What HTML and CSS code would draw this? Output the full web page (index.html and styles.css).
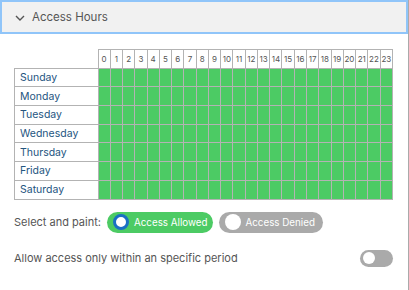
FILE: index.html
```html
<!DOCTYPE html>
<html lang="en">
<head>
    <meta charset="UTF-8">
    <title>Access Hours</title>
    <link rel="stylesheet" href="styles.css">
</head>
<body>
    <div class="panel">
        <div class="panel-header">
            <svg class="chevron" width="10" height="6" viewBox="0 0 10 6"><path d="M1 1 L5 5 L9 1" fill="none" stroke="#555" stroke-width="1.4"/></svg>
            <span>Access Hours</span>
        </div>
        <div class="panel-body">
            <table class="hours" id="hours"></table>
            <div class="paint-row">
                <span class="label">Select and paint:</span>
                <button class="pill allowed"><span class="dot"></span>Access Allowed</button>
                <button class="pill denied"><span class="dot"></span>Access Denied</button>
            </div>
            <div class="period-row">
                <span class="label">Allow access only within an specific period</span>
                <span class="switch"><span class="knob"></span></span>
            </div>
        </div>
    </div>
    <script>
        const days = ["Sunday", "Monday", "Tuesday", "Wednesday", "Thursday", "Friday", "Saturday"];
        const table = document.getElementById("hours");
        let head = "<tr><th class='corner'></th>";
        for (let h = 0; h < 24; h++) head += "<th>" + h + "</th>";
        head += "</tr>";
        let rows = "";
        days.forEach(day => {
            rows += "<tr><td class='day'>" + day + "</td>";
            for (let h = 0; h < 24; h++) rows += "<td class='on'></td>";
            rows += "</tr>";
        });
        table.innerHTML = head + rows;
    </script>
</body>
</html>
```
FILE: styles.css
```css
body {
    margin: 0;
    font-family: Inter, "Open Sans", sans-serif;
    color: #555;
    background: #fff;
}
.panel {
    width: 408px;
    height: 290px;
    border-right: 1px solid #aaa;
}
.panel-header {
    box-sizing: border-box;
    height: 34px;
    display: flex;
    align-items: center;
    gap: 7px;
    padding-left: 13px;
    background: #f1f1f1;
    border: 2px solid #90c5f9;
    font-size: 11.5px;
    color: #555;
}
.chevron {
    margin-top: 1px;
}
.panel-body {
    padding: 15px 0 0 14px;
}
.hours {
    border-collapse: collapse;
    table-layout: fixed;
    width: 379px;
}
.hours th {
    height: 17.7px;
    padding: 0;
    font-size: 8px;
    font-weight: normal;
    color: #555;
    border: 1px solid #b3b3b3;
    text-align: center;
}
.hours th.corner {
    border: none;
    border-bottom: 1px solid #b3b3b3;
    width: 83px;
}
.hours td {
    height: 17.7px;
    padding: 0;
    border: 1px solid #b3b3b3;
}
.hours td.day {
    padding-left: 5px;
    font-size: 10.5px;
    color: #24557f;
    white-space: nowrap;
}
.hours td.on {
    background: #4ccb64;
}
.paint-row {
    display: flex;
    align-items: center;
    margin-top: 12px;
    height: 21px;
}
.label {
    font-size: 11px;
    color: #555;
}
.pill {
    display: flex;
    align-items: center;
    height: 21px;
    border: none;
    border-radius: 11px;
    padding: 0 5px 0 6px;
    gap: 5px;
    font-family: inherit;
    font-size: 9.8px;
    color: #fff;
}
.allowed {
    margin-left: 6px;
    background: #4ccb64;
}
.denied {
    margin-left: 6px;
    padding-right: 8px;
    background: #aaa;
}
.dot {
    box-sizing: border-box;
    width: 16px;
    height: 16px;
    border-radius: 50%;
    background: #fff;
}
.allowed .dot {
    border: 3px solid #1a6fc4;
}
.period-row {
    display: flex;
    align-items: center;
    justify-content: space-between;
    width: 379px;
    margin-top: 17px;
}
.switch {
    width: 33px;
    height: 17px;
    border-radius: 9px;
    background: #aaa;
    display: flex;
    align-items: center;
    padding-left: 3px;
    box-sizing: border-box;
}
.knob {
    width: 12px;
    height: 12px;
    border-radius: 50%;
    background: #fff;
}
```
